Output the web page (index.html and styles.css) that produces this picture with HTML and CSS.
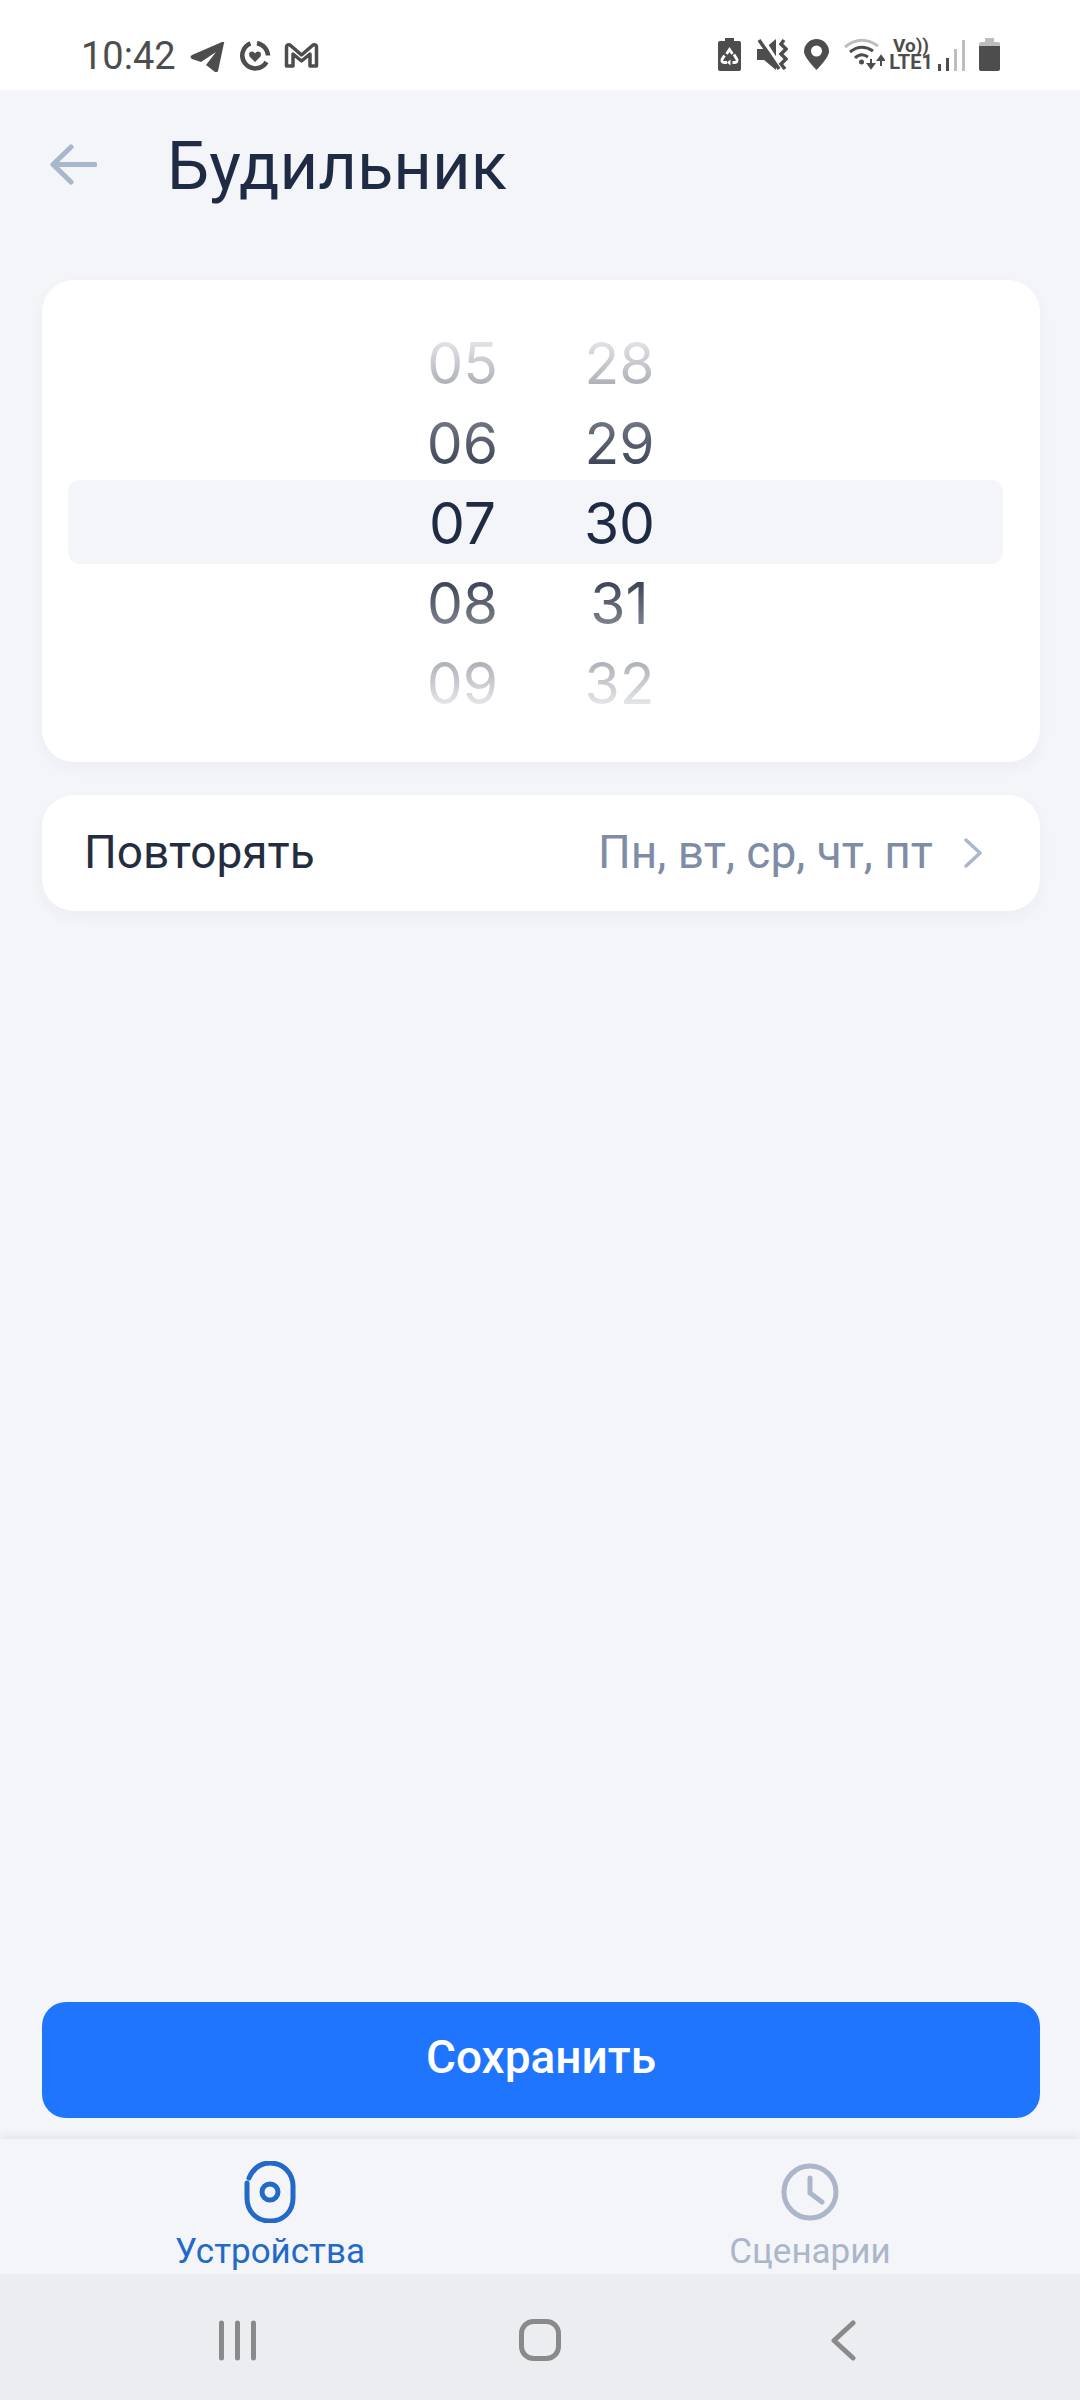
FILE: index.html
```html
<!DOCTYPE html>
<html lang="ru">
<head>
<meta charset="utf-8">
<title>Будильник</title>
<link rel="stylesheet" href="styles.css">
</head>
<body>
<div class="screen">
  <div class="status">
    <div class="status-left">
      <span class="clock">10:42</span>
      <svg class="ic-tg" viewBox="0 0 35 30"><path d="M34 1 L28 29 Q27 31 25 30 L16 23 L26 10 L11 20 L2 17 Q-1 15 2 13 L32 0 Q35 -1 34 1Z" fill="#4d4d4d"/></svg>
      <svg class="ic-ring" viewBox="0 0 32 32"><path d="M11.500 3.300 A13 13 0 1 0 27.500 22" fill="none" stroke="#4d4d4d" stroke-width="4.500"/><path d="M18 3.200 A13 13 0 0 1 29 15.500" fill="none" stroke="#4d4d4d" stroke-width="4.500"/><path d="M16 22 L10.500 16.500 Q9 11.500 13 11.500 Q15 11.500 16 13.500 Q17 11.500 19 11.500 Q23 11.500 21.500 16.500Z" fill="#4d4d4d"/></svg>
      <svg class="ic-m" viewBox="0 0 35 26"><path d="M2.500 24 V5 Q2.500 2 6 3 L17.500 13 L29 3 Q32.500 2 32.500 5 V24 H26 V12 L17.500 19 L9 12 V24Z" fill="none" stroke="#4d4d4d" stroke-width="3.500" stroke-linejoin="round"/></svg>
    </div>
    <div class="status-right">
      <svg class="ic-bat1" viewBox="0 0 23 33"><path d="M7 0 H16 V3 H21 Q23 3 23 5 V31 Q23 33 21 33 H2 Q0 33 0 31 V5 Q0 3 2 3 H7Z" fill="#4d4d4d"/><path d="M8.500 16 L11.500 11.500 L14.500 16 M16 16.500 L19 21.500 Q19.500 24.500 17 24.500 H14.500 M9 24.500 H6 Q3.500 24.500 4 21.500 L6.500 17.500" fill="none" stroke="#fff" stroke-width="2.800"/><path d="M12.500 21.500 V27.500 L9 24.500Z" fill="#fff"/></svg>
      <svg class="ic-mute" viewBox="0 0 31 31"><path d="M0 10 H7 L19 0 V31 L7 21 H0Z" fill="#4d4d4d"/><path d="M5 -1 L27 33" stroke="#fff" stroke-width="3.500"/><path d="M2 1 L22 30" stroke="#4d4d4d" stroke-width="3.500"/><path d="M27 1 L24 5 L29 10 L24 15 L29 20 L24 25 L28 30" fill="none" stroke="#4d4d4d" stroke-width="3.500"/></svg>
      <svg class="ic-pin" viewBox="0 0 25 31"><path d="M12.500 31 Q0 18 0 12.500 A12.500 12.500 0 0 1 25 12.500 Q25 18 12.500 31Z" fill="#4d4d4d"/><circle cx="12.500" cy="12" r="5.500" fill="#fff"/></svg>
      <svg class="ic-wifi" viewBox="0 0 41 32"><path d="M1 9 Q17 -4 34 8" fill="none" stroke="#bdbdbd" stroke-width="3"/><path d="M6 14 Q17 5 29 13 M11 20 Q17 14 24 19" fill="none" stroke="#4d4d4d" stroke-width="3"/><circle cx="17.500" cy="24" r="2.500" fill="#4d4d4d"/><path d="M27 21 V29 M24 26 L27 30 L30 26Z M37 28 V20 M34 22 L37 18 L40 22Z" fill="#4d4d4d" stroke="#4d4d4d" stroke-width="2"/></svg>
      <div class="volte"><span class="vo">Vo))</span><span class="lte">LTE1</span></div>
      <svg class="ic-sig" viewBox="0 0 27 31"><rect x="0" y="24" width="3" height="7" fill="#4d4d4d"/><rect x="8" y="18" width="3" height="13" fill="#4d4d4d"/><rect x="16" y="9" width="3" height="22" fill="#bdbdbd"/><rect x="24" y="0" width="3" height="31" fill="#bdbdbd"/></svg>
      <svg class="ic-bat2" viewBox="0 0 21 33"><path d="M6 0 H15 V4 H6Z M0 6 Q0 4 2 4 H19 Q21 4 21 6 V8 H0Z" fill="#bdbdbd"/><path d="M0 8 H21 V31 Q21 33 19 33 H2 Q0 33 0 31Z" fill="#4d4d4d"/></svg>
    </div>
  </div>

  <main class="content">
    <header class="topbar">
      <svg class="back" viewBox="0 0 47 41"><path d="M45 20.500 H3 M21 3 L3 20.500 L21 38" fill="none" stroke="#a9b6cc" stroke-width="5" stroke-linecap="round" stroke-linejoin="round"/></svg>
      <h1 class="title">Будильник</h1>
    </header>

    <section class="card picker">
      <div class="band"></div>
      <div class="wheel">
        <div class="col"><div class="num">05</div><div class="num">06</div><div class="num">07</div><div class="num">08</div><div class="num">09</div></div>
        <div class="col"><div class="num">28</div><div class="num">29</div><div class="num">30</div><div class="num">31</div><div class="num">32</div></div>
      </div>
    </section>

    <section class="card repeat">
      <span class="repeat-label">Повторять</span>
      <span class="repeat-value">Пн, вт, ср, чт, пт</span>
      <svg class="chev" viewBox="0 0 20 32"><path d="M3 3 L17 16 L3 29" fill="none" stroke="#a9b6cc" stroke-width="3.500" stroke-linecap="round" stroke-linejoin="round"/></svg>
    </section>

    <button class="save">Сохранить</button>
  </main>

  <nav class="tabs">
    <div class="tab active">
      <svg class="tab-ic" viewBox="0 0 60 62"><path d="M9 17 C14 6 22 2 30 2 C44 2 53 13 53 25 V37 C53 50 44 60 30 60 C16 60 7 50 7 37 V22" fill="none" stroke="#2369c8" stroke-width="5" stroke-linecap="round"/><circle cx="30" cy="31" r="8" fill="none" stroke="#2369c8" stroke-width="5"/></svg>
      <span class="tab-label">Устройства</span>
    </div>
    <div class="tab">
      <svg class="tab-ic" viewBox="0 0 60 62"><circle cx="30" cy="31" r="26" fill="none" stroke="#abb6c9" stroke-width="5"/><path d="M30 17 V32 L42 41" fill="none" stroke="#abb6c9" stroke-width="5" stroke-linecap="round" stroke-linejoin="round"/></svg>
      <span class="tab-label">Сценарии</span>
    </div>
  </nav>

  <div class="sysnav">
    <svg class="sys-recent" viewBox="0 0 37 41"><path d="M2.500 3 V38 M18.500 3 V38 M34.500 3 V38" stroke="#8a8a8c" stroke-width="5" stroke-linecap="round"/></svg>
    <svg class="sys-home" viewBox="0 0 42 42"><rect x="2.500" y="2.500" width="37" height="37" rx="12" fill="none" stroke="#8a8a8c" stroke-width="5"/></svg>
    <svg class="sys-back" viewBox="0 0 25 41"><path d="M22 3 L3 20.500 L22 38" fill="none" stroke="#8a8a8c" stroke-width="5" stroke-linecap="round" stroke-linejoin="round"/></svg>
  </div>
</div>
</body>
</html>
```

FILE: styles.css
```css
* { box-sizing: border-box; }
html, body { margin: 0; padding: 0; }
body { font-family: Roboto, "Liberation Sans", sans-serif; background: #f3f5f9; }
svg { display: block; flex: none; }

.screen { width: 1080px; height: 2400px; display: flex; flex-direction: column; overflow: hidden; }

.status { height: 90px; flex: none; background: #fff; display: flex; justify-content: space-between; padding: 0 80px 0 81px; }
.status-left { display: flex; align-items: flex-start; padding-top: 40px; }
.clock { font-size: 38px; line-height: 32px; color: #4d4d4d; width: 109px; }
.ic-tg { width: 35px; height: 30px; margin-top: 2px; }
.ic-ring { width: 32px; height: 32px; margin-left: 14px; }
.ic-m { width: 35px; height: 26px; margin-left: 13px; margin-top: 2px; }
.status-right { display: flex; align-items: flex-start; padding-top: 38px; }
.ic-bat1 { width: 23px; height: 33px; }
.ic-mute { width: 31px; height: 31px; margin-left: 16px; margin-top: 1px; }
.ic-pin { width: 25px; height: 31px; margin-left: 16px; margin-top: 1px; }
.ic-wifi { width: 41px; height: 32px; margin-left: 15px; }
.volte { width: 40px; margin-left: 6px; display: flex; flex-direction: column; align-items: center; color: #4d4d4d; font-weight: 700; }
.vo { font-size: 19px; line-height: 16px; }
.lte { font-size: 20px; line-height: 17px; }
.ic-sig { width: 27px; height: 31px; margin-left: 7px; margin-top: 2px; }
.ic-bat2 { width: 21px; height: 33px; margin-left: 14px; }

.content { flex: 1; display: flex; flex-direction: column; padding: 0 40px 0 42px; }
.topbar { display: flex; align-items: center; height: 150px; padding-left: 8px; margin-bottom: 40px; }
.back { width: 47px; height: 41px; margin-bottom: 2px; }
.title { margin: 2px 0 0 70px; font-size: 67px; font-weight: 450; color: #1f2a44; line-height: 80px; }

.card { background: #fff; border-radius: 32px; box-shadow: 0 6px 16px rgba(40, 60, 110, 0.04); }
.picker { position: relative; height: 482px; padding-top: 44px; }
.band { position: absolute; left: 26px; right: 37px; top: 200px; height: 84px; background: #f3f5f9; border-radius: 12px; }
.wheel { position: relative; display: flex; justify-content: center; gap: 57px; }
.col {
  width: 100px;
  text-align: center;
  font-family: Inter, Roboto, sans-serif;
  font-size: 57px;
  color: transparent;
  background: linear-gradient(180deg, #f2f3f5 0%, #dfe0e4 5%, #aeb1b9 15%, #6e7380 25%, #3f4759 35%, #1f2a44 45%, #1f2a44 55%, #3f4759 65%, #7d818c 75%, #b0b3ba 85%, #e4e5e8 95%, #f4f4f6 100%);
  -webkit-background-clip: text;
  background-clip: text;
}
.num { height: 80px; line-height: 80px; }

.repeat { margin-top: 33px; height: 116px; display: flex; align-items: center; padding: 0 57px 0 42px; }
.repeat-label { font-size: 46px; line-height: 54px; color: #242d40; flex: 1; margin-bottom: 2px; }
.repeat-value { font-size: 46px; line-height: 54px; color: #7f8ca6; margin-bottom: 2px; }
.chev { width: 20px; height: 32px; margin-left: 30px; }

.save { margin-top: auto; margin-bottom: 21px; height: 116px; flex: none; width: 100%; border: 0; border-radius: 24px; padding: 0 0 6px; background: #1f75fe; color: #fff; font-family: Roboto, sans-serif; font-size: 46px; font-weight: 500; }

.tabs { height: 135px; flex: none; background: #f3f5f9; display: grid; grid-template-columns: 1fr 1fr; box-shadow: 0 -3px 8px rgba(40, 50, 80, 0.09); position: relative; }
.tab { display: flex; flex-direction: column; align-items: center; padding-top: 22px; color: #abb6c9; }
.tab.active { color: #2369c8; }
.tab-ic { width: 60px; height: 62px; }
.tab-label { font-size: 35px; line-height: 40px; margin-top: 9px; }

.sysnav { height: 126px; flex: none; background: #ebedf1; display: grid; grid-template-columns: repeat(3, 303px); justify-content: center; justify-items: center; align-items: center; padding-top: 6px; position: relative; }
.sys-recent { width: 37px; height: 41px; }
.sys-home { width: 42px; height: 42px; }
.sys-back { width: 25px; height: 41px; }
```
